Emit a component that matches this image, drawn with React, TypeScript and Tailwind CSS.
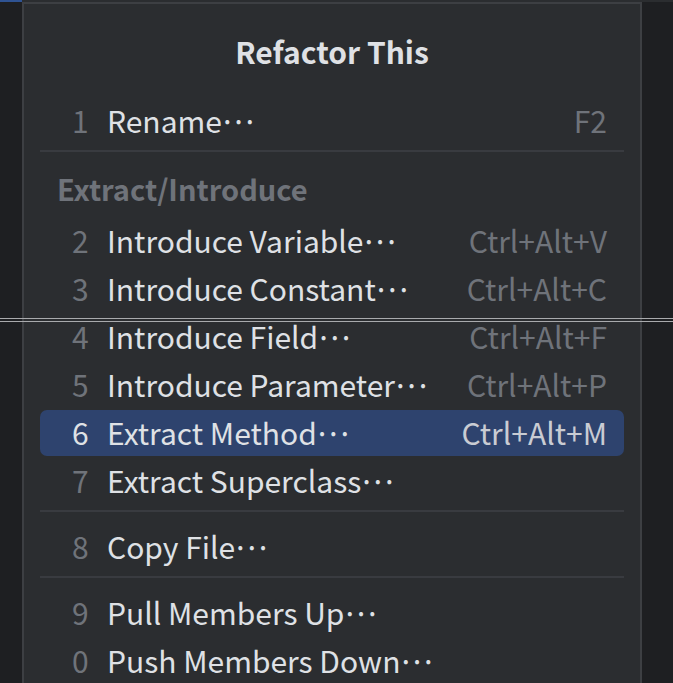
import React from 'react';

// ===== Types =====

type Item = { key: string; label: string; more?: boolean; shortcut?: string; active?: boolean };

type Block =
    | { kind: 'items'; items: Item[] }
    | { kind: 'header'; title: string; items: Item[] }
    | { kind: 'sep' };

// ===== Data =====

const blocks: Block[] = [
    { kind: 'items', items: [{ key: '1', label: 'Rename', more: true, shortcut: 'F2' }] },
    { kind: 'sep' },
    {
        kind: 'header',
        title: 'Extract/Introduce',
        items: [
            { key: '2', label: 'Introduce Variable', more: true, shortcut: 'Ctrl+Alt+V' },
            { key: '3', label: 'Introduce Constant', more: true, shortcut: 'Ctrl+Alt+C' },
            { key: '4', label: 'Introduce Field', more: true, shortcut: 'Ctrl+Alt+F' },
            { key: '5', label: 'Introduce Parameter', more: true, shortcut: 'Ctrl+Alt+P' },
            { key: '6', label: 'Extract Method', more: true, shortcut: 'Ctrl+Alt+M', active: true },
            { key: '7', label: 'Extract Superclass', more: true },
        ],
    },
    { kind: 'sep' },
    { kind: 'items', items: [{ key: '8', label: 'Copy File', more: true }] },
    { kind: 'sep' },
    {
        kind: 'items',
        items: [
            { key: '9', label: 'Pull Members Up', more: true },
            { key: '0', label: 'Push Members Down', more: true },
        ],
    },
];

// ===== Row =====

const Row = ({ item }: { item: Item }) => (
    <div
        className={
            item.active
                ? 'flex h-[46px] my-px items-center rounded-[7px] bg-[#2e436e] pl-[32px] pr-[17px] pb-[3px]'
                : 'flex h-[48px] items-center pl-[32px] pr-[17px] pb-[3px]'
        }
    >
        <span className={item.active ? 'w-[35px] text-[#dfe1e5]' : 'w-[35px] text-[#6f737a]'}>{item.key}</span>
        <span className="flex-1 text-[#dfe1e5]">
            {item.label}
            {item.more && <span className="ml-[-3px] tracking-[-5.5px]">···</span>}
        </span>
        {item.shortcut && (
            <span className={item.active ? 'text-[#c9ccd3]' : 'text-[#6f737a]'}>{item.shortcut}</span>
        )}
    </div>
);

// ===== App =====

export default function App() {
    return (
        <div
            className="relative flex h-[683px] w-[673px] flex-col overflow-hidden bg-[#1e1f22] text-[30px] leading-none"
            style={{ fontFamily: '"Noto Sans CJK JP", "Noto Sans", sans-serif' }}
        >
            {/* Top strip */}
            <div className="flex h-[2px] shrink-0">
                <div className="w-[22px] bg-[#2f5393]" />
                <div className="flex-1 bg-[#2b2d30]" />
            </div>

            <div className="flex flex-1">
                <div className="w-[22px] bg-[#1e1f22]" />

                {/* Popup */}
                <div className="w-[620px] border-2 border-b-0 border-[#3d3f43] bg-[#2b2d30] px-4">
                    <div className="mt-[24px] flex h-[48px] items-center justify-center pb-[3px] font-bold text-[#dfe1e5]">
                        Refactor This
                    </div>
                    <div className="mt-[21px]">
                        {blocks.map((b, i) => {
                            if (b.kind === 'sep') {
                                return <div key={i} className="mt-[5px] mb-[11px] h-[2px] bg-[#393b40]" />;
                            }
                            return (
                                <div key={i}>
                                    {b.kind === 'header' && (
                                        <div className="flex h-[54px] items-center pb-[3px] pl-[17px] text-[29px] font-bold text-[#6f737a]">
                                            {b.title}
                                        </div>
                                    )}
                                    {b.items.map((it) => (
                                        <Row key={it.key} item={it} />
                                    ))}
                                </div>
                            );
                        })}
                    </div>
                </div>

                <div className="flex-1 bg-[#1e1f22]" />
            </div>

            {/* Overlay guide lines */}
            <div className="absolute left-0 right-0 top-[318px] h-px bg-[#a9aaad]" />
            <div className="absolute left-0 right-0 top-[321px] h-px bg-[#a9aaad]" />
        </div>
    );
}
